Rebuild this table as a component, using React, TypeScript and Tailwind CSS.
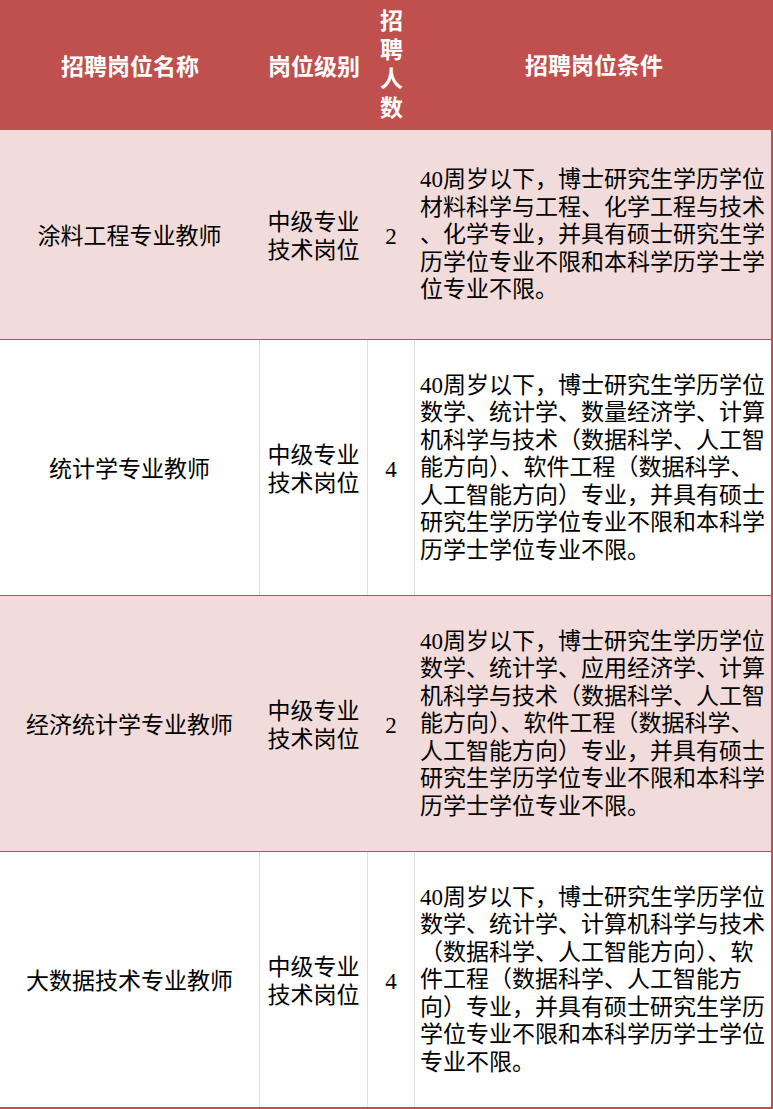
import React from "react";

type Row = {
  name: string;
  count: string;
  lines: string[];
  pink: boolean;
  h: string;
};

const rows: Row[] = [
  {
    name: "涂料工程专业教师",
    count: "2",
    pink: true,
    h: "h-[210px]",
    lines: [
      "40周岁以下，博士研究生学历学位",
      "材料科学与工程、化学工程与技术",
      "、化学专业，并具有硕士研究生学",
      "历学位专业不限和本科学历学士学",
      "位专业不限。",
    ],
  },
  {
    name: "统计学专业教师",
    count: "4",
    pink: false,
    h: "h-[256px]",
    lines: [
      "40周岁以下，博士研究生学历学位",
      "数学、统计学、数量经济学、计算",
      "机科学与技术（数据科学、人工智",
      "能方向）、软件工程（数据科学、",
      "人工智能方向）专业，并具有硕士",
      "研究生学历学位专业不限和本科学",
      "历学士学位专业不限。",
    ],
  },
  {
    name: "经济统计学专业教师",
    count: "2",
    pink: true,
    h: "h-[256px]",
    lines: [
      "40周岁以下，博士研究生学历学位",
      "数学、统计学、应用经济学、计算",
      "机科学与技术（数据科学、人工智",
      "能方向）、软件工程（数据科学、",
      "人工智能方向）专业，并具有硕士",
      "研究生学历学位专业不限和本科学",
      "历学士学位专业不限。",
    ],
  },
  {
    name: "大数据技术专业教师",
    count: "4",
    pink: false,
    h: "h-[257px]",
    lines: [
      "40周岁以下，博士研究生学历学位",
      "数学、统计学、计算机科学与技术",
      "（数据科学、人工智能方向）、软",
      "件工程（数据科学、人工智能方",
      "向）专业，并具有硕士研究生学历",
      "学位专业不限和本科学历学士学位",
      "专业不限。",
    ],
  },
];

const font = {
  fontFamily: '"Liberation Serif", "Noto Sans CJK SC", serif',
};

export default function App() {
  return (
    <div className="w-[773px] h-[1109px] bg-white text-black" style={font}>
      {/* header */}
      <div className="grid grid-cols-[260px_108px_47px_1fr] h-[130px] bg-[#c0504d] text-white font-bold text-[23px]">
        <div className="flex items-center justify-center pt-[6px]">招聘岗位名称</div>
        <div className="flex items-center justify-center pt-[6px]">岗位级别</div>
        <div className="flex flex-col items-center justify-center leading-[29px]">
          <span>招</span>
          <span>聘</span>
          <span>人</span>
          <span>数</span>
        </div>
        <div className="flex items-center justify-center pt-[4px]">招聘岗位条件</div>
      </div>
      {rows.map((r, i) => {
        const last = i === rows.length - 1;
        const vb = r.pink ? "border-[#f2dcdb]" : "border-[#e1e1e1]";
        return (
          <div
            key={i}
            className={`grid grid-cols-[260px_108px_47px_1fr] ${r.h} ${
              r.pink ? "bg-[#f2dcdb]" : "bg-white"
            } border-r-2 border-r-[#c0504d] ${
              last ? "border-b-2" : "border-b"
            } border-b-[#c0504d] text-[23px] leading-[27.5px]`}
          >
            <div className={`flex items-center justify-center pt-[5px] border-r ${vb}`}>
              {r.name}
            </div>
            <div className={`flex flex-col items-center justify-center pt-[4px] border-r ${vb}`}>
              <span>中级专业</span>
              <span>技术岗位</span>
            </div>
            <div className={`flex items-center justify-center pt-[4px] border-r ${vb}`}>
              {r.count}
            </div>
            <div className="flex flex-col justify-center pl-[5px] pt-[1px]">
              {r.lines.map((l, j) => (
                <div key={j} className="whitespace-nowrap">
                  {l}
                </div>
              ))}
            </div>
          </div>
        );
      })}
    </div>
  );
}
